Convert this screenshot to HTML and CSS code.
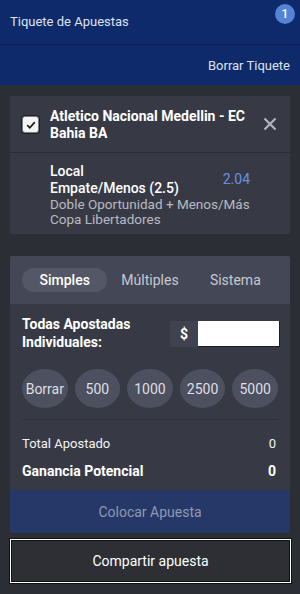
FILE: index.html
```html
<!DOCTYPE html>
<html lang="es">
<head>
<meta charset="utf-8">
<link rel="stylesheet" href="styles.css">
</head>
<body>
<div class="header">
  <div class="header-top">
    <span class="title">Tiquete de Apuestas</span>
    <span class="badge">1</span>
  </div>
  <div class="header-bottom">
    <span class="clear">Borrar Tiquete</span>
  </div>
</div>

<div class="card selection">
  <div class="sel-head">
    <span class="checkbox">
      <svg width="12" height="12" viewBox="0 0 12 12"><path d="M2.2 6.2 L4.8 8.8 L9.8 3.2" fill="none" stroke="#1d1f24" stroke-width="1.8"/></svg>
    </span>
    <span class="match">Atletico Nacional Medellin - EC Bahia BA</span>
    <span class="close">
      <svg width="14" height="14" viewBox="0 0 14 14"><path d="M1.5 1.5 L12.5 12.5 M12.5 1.5 L1.5 12.5" stroke="#b2b5bd" stroke-width="2.2" stroke-linecap="butt"/></svg>
    </span>
  </div>
  <div class="sel-body">
    <div class="sel-info">
      <div class="pick">Local</div>
      <div class="pick">Empate/Menos (2.5)</div>
      <div class="market">Doble Oportunidad + Menos/Más</div>
      <div class="market">Copa Libertadores</div>
    </div>
    <div class="odds">2.04</div>
  </div>
</div>

<div class="card slip">
  <div class="tabs">
    <span class="tab active">Simples</span>
    <span class="tab">Múltiples</span>
    <span class="tab">Sistema</span>
  </div>
  <div class="stake">
    <div class="stake-row">
      <span class="stake-label">Todas Apostadas Individuales:</span>
      <div class="stake-input">
        <span class="currency">$</span>
        <span class="input"></span>
      </div>
    </div>
    <div class="quick">
      <span class="qbtn">Borrar</span>
      <span class="qbtn">500</span>
      <span class="qbtn">1000</span>
      <span class="qbtn">2500</span>
      <span class="qbtn">5000</span>
    </div>
    <div class="totals">
      <div class="trow"><span>Total Apostado</span><span>0</span></div>
      <div class="trow strong"><span>Ganancia Potencial</span><span>0</span></div>
    </div>
  </div>
  <div class="place">Colocar Apuesta</div>
</div>

<div class="share">Compartir apuesta</div>
</body>
</html>
```

FILE: styles.css
```css
* { box-sizing: border-box; }
body {
  margin: 0;
  background: #2b2e35;
  font-family: Roboto, "Liberation Sans", sans-serif;
  color: #fff;
  width: 300px;
  height: 594px;
  overflow: hidden;
}
.header {
  background: #0f2a6b;
  height: 85px;
}
.header-top {
  height: 45px;
  border-bottom: 1px solid #0a1f4f;
  display: flex;
  justify-content: space-between;
  padding: 0 5px 0 10px;
}
.title {
  font-size: 13px;
  color: #dde2ee;
  margin-top: 14px;
}
.badge {
  width: 20px;
  height: 20px;
  border-radius: 50%;
  background: #5482d6;
  color: #fff;
  font-size: 12px;
  font-weight: 500;
  display: flex;
  align-items: center;
  justify-content: center;
  margin-top: 4px;
}
.header-bottom {
  height: 40px;
  display: flex;
  justify-content: flex-end;
  align-items: center;
  padding-right: 10px;
}
.clear {
  font-size: 13px;
  color: #dde2ee;
}
.card {
  background: #373a45;
  margin: 11px 10px 0;
  border-radius: 2px;
}
.sel-head {
  display: flex;
  align-items: center;
  height: 57px;
  border-bottom: 1px solid #2b2e35;
  padding: 0 12px;
}
.checkbox {
  width: 17px;
  height: 17px;
  border: 1px solid #7a7d85;
  border-radius: 3px;
  background: #f4f4f4;
  box-shadow: 0 0 0 1px #1e2026;
  display: flex;
  align-items: center;
  justify-content: center;
  flex: none;
  margin-right: 11px;
  margin-top: 1px;
}
.match {
  font-size: 14px;
  font-weight: 700;
  line-height: 17px;
  flex: 1;
  margin-top: 1px;
}
.close {
  display: flex;
  margin-right: 1px;
  margin-left: 10px;
}
.sel-body {
  display: flex;
  align-items: flex-start;
  padding: 10px 40px 10px 40px;
  height: 81px;
}
.sel-info { flex: 1; min-width: 0; }
.pick {
  font-size: 14px;
  font-weight: 500;
  line-height: 17px;
}
.market {
  font-size: 13.5px;
  color: #b7bac2;
  line-height: 15px;
  white-space: nowrap;
}
.odds {
  color: #6a8fe4;
  font-size: 14px;
  margin-top: 8px;
}
.slip {
  margin-top: 22px;
  overflow: hidden;
}
.tabs {
  background: #444755;
  height: 48px;
  display: grid;
  grid-template-columns: repeat(3, 1fr);
  align-items: center;
  padding: 0 12px;
}
.tab {
  height: 24px;
  border-radius: 12px;
  display: flex;
  align-items: center;
  justify-content: center;
  font-size: 14px;
  color: #c7c9d1;
}
.tab.active {
  background: #535766;
  color: #fff;
  font-weight: 500;
}
.stake {
  padding: 11px 12px 0;
}
.stake-row {
  display: flex;
  align-items: center;
  justify-content: space-between;
  margin-right: -2px;
}
.stake-label {
  font-size: 14px;
  font-weight: 700;
  line-height: 18px;
  width: 130px;
}
.stake-input {
  display: flex;
  height: 26px;
  margin-top: 2px;
}
.currency {
  width: 28px;
  background: #40434f;
  display: flex;
  align-items: center;
  justify-content: center;
  font-size: 14px;
  font-weight: 700;
  border-radius: 2px 0 0 2px;
}
.input {
  width: 82px;
  background: #fff;
  border-right: 1px solid #1a1d28;
  border-bottom: 1px solid #1a1d28;
}
.quick {
  display: flex;
  gap: 7px;
  margin-top: 18px;
  padding-bottom: 11px;
  border-bottom: 1px solid #30333c;
}
.qbtn {
  flex: 1;
  height: 39px;
  border-radius: 50%;
  background: #4d505e;
  display: flex;
  align-items: center;
  justify-content: center;
  font-size: 14px;
  color: #dddfe5;
}
.totals {
  padding: 15px 2px 11px 0;
}
.trow {
  display: flex;
  justify-content: space-between;
  font-size: 13px;
  height: 16px;
  align-items: center;
  color: #f2f3f5;
}
.trow.strong {
  font-size: 14px;
  font-weight: 700;
  margin-top: 12px;
  color: #fff;
}
.place {
  background: #253868;
  height: 43px;
  display: flex;
  align-items: center;
  justify-content: center;
  font-size: 14px;
  color: #8e98b3;
}
.share {
  margin: 6px 9px 0 10px;
  height: 44px;
  border: 1px solid #fff;
  box-shadow: 0 0 0 1px #111, inset 0 0 0 1px #111;
  background: #2d2f35;
  display: flex;
  align-items: center;
  justify-content: center;
  font-size: 14px;
  color: #fff;
}
```
